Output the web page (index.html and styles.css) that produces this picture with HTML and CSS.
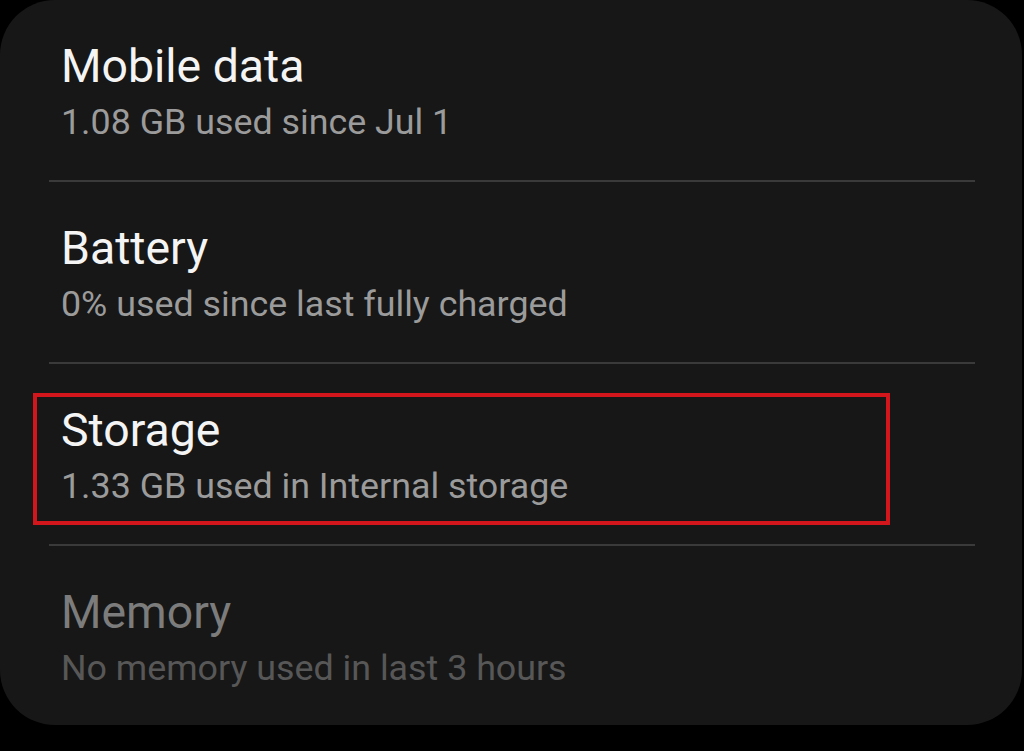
FILE: index.html
```html
<!DOCTYPE html>
<html lang="en">
<head>
    <meta charset="UTF-8">
    <meta name="viewport" content="width=device-width, initial-scale=1.0">
    <title>Device care</title>
    <link rel="stylesheet" href="styles.css">
</head>
<body>
    <div class="card">
        <ul class="list">
            <li class="item">
                <div class="title">Mobile data</div>
                <div class="summary">1.08 GB used since Jul 1</div>
            </li>
            <li class="item">
                <div class="title">Battery</div>
                <div class="summary">0% used since last fully charged</div>
            </li>
            <li class="item">
                <div class="title">Storage</div>
                <div class="summary">1.33 GB used in Internal storage</div>
            </li>
            <li class="item disabled">
                <div class="title">Memory</div>
                <div class="summary">No memory used in last 3 hours</div>
            </li>
        </ul>
        <!-- annotation box round the storage row -->
        <div class="highlight"></div>
    </div>
</body>
</html>
```

FILE: styles.css
```css
body {
    margin: 0;
    padding: 0;
    height: 100vh;
    overflow: hidden;
    background-color: #000000;
    font-family: Roboto, "Noto Sans", sans-serif;
}
.card {
    position: relative;
    width: 1022px;
    height: 725px;
    background: #171717;
    border-radius: 55px;
    box-sizing: border-box;
    padding: 0 47px 0 49px;
}
.list {
    list-style: none;
    margin: 0;
    padding: 0;
}
.item {
    padding: 38px 0 30px 12px;
    border-bottom: 2px solid #3a3a3a;
}
.item:last-child {
    border-bottom: none;
}
.title {
    font-size: 46.4px;
    line-height: 56px;
    color: #f4f4f4;
}
.summary {
    font-size: 35.8px;
    line-height: 56px;
    color: #9b9b9b;
}
.disabled .title { color: #7c7c7c; }
.disabled .summary { color: #575757; }
.highlight {
    position: absolute;
    left: 33px;
    top: 393px;
    width: 849px;
    height: 124px;
    border: 4px solid #d3151c;
}
```
